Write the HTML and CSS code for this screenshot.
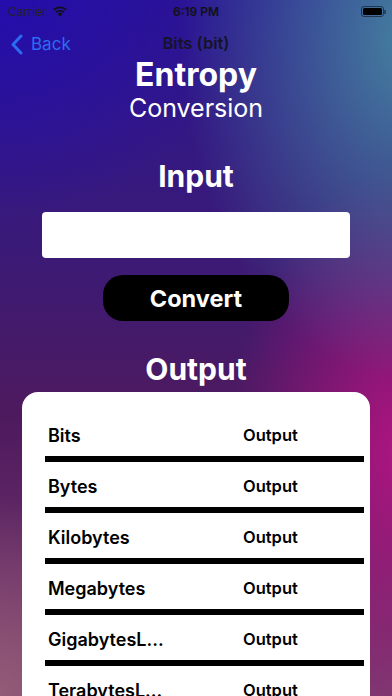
FILE: index.html
```html
<!DOCTYPE html>
<html>
<head>
<meta charset="utf-8">
<link rel="stylesheet" href="styles.css">
</head>
<body>
<div class="screen">
  <div class="status">
    <div class="status-left">
      <span class="carrier">Carrier</span>
      <svg class="wifi" width="16" height="12" viewBox="0 0 16 12">
        <path d="M8 11.5 L5.6 8.9 A3.6 3.6 0 0 1 10.4 8.9 Z" fill="#111"/>
        <path d="M3.6 6.8 A6.4 6.4 0 0 1 12.4 6.8 L11.2 8.1 A4.7 4.7 0 0 0 4.8 8.1 Z" fill="#111"/>
        <path d="M1.2 4.3 A9.8 9.8 0 0 1 14.8 4.3 L13.6 5.6 A8 8 0 0 0 2.4 5.6 Z" fill="#111"/>
      </svg>
    </div>
    <span class="time">6:19 PM</span>
    <div class="battery"><div class="battery-fill"></div></div>
  </div>
  <div class="nav">
    <div class="back">
      <svg width="13" height="21" viewBox="0 0 13 21"><path d="M11 2 L3 10.5 L11 19" fill="none" stroke="#2a6cf2" stroke-width="3" stroke-linecap="round" stroke-linejoin="round"/></svg>
      <span>Back</span>
    </div>
    <div class="nav-title">Bits (bit)</div>
  </div>
  <h1 class="title">Entropy</h1>
  <div class="subtitle">Conversion</div>
  <h2 class="section">Input</h2>
  <div class="input-box"></div>
  <div class="convert">Convert</div>
  <h2 class="section out">Output</h2>
  <div class="card">
    <div class="row"><span class="name">Bits</span><span class="val">Output</span></div>
    <div class="divider"></div>
    <div class="row"><span class="name">Bytes</span><span class="val">Output</span></div>
    <div class="divider"></div>
    <div class="row"><span class="name">Kilobytes</span><span class="val">Output</span></div>
    <div class="divider"></div>
    <div class="row"><span class="name">Megabytes</span><span class="val">Output</span></div>
    <div class="divider"></div>
    <div class="row"><span class="name">GigabytesL...</span><span class="val">Output</span></div>
    <div class="divider"></div>
    <div class="row"><span class="name">TerabytesL...</span><span class="val">Output</span></div>
  </div>
</div>
</body>
</html>
```
FILE: styles.css
```css
* { box-sizing: border-box; margin: 0; padding: 0; }
html, body { width: 392px; height: 696px; overflow: hidden; }
body {
  font-family: Inter, "Liberation Sans", sans-serif;
}
.screen {
  width: 392px;
  height: 696px;
  overflow: hidden;
  display: flex;
  flex-direction: column;
  align-items: center;
  background:
    radial-gradient(ellipse 230px 340px at 410px 40px, rgba(70,135,160,0.95), rgba(70,135,160,0) 100%),
    radial-gradient(ellipse 170px 280px at 400px 450px, rgba(178,20,130,0.95), rgba(178,20,130,0) 100%),
    radial-gradient(ellipse 240px 220px at 0px 0px, rgba(35,12,175,0.9), rgba(35,12,175,0) 100%),
    radial-gradient(ellipse 150px 200px at 0px 696px, rgba(150,95,120,0.9), rgba(150,95,120,0) 100%),
    linear-gradient(180deg, #2c1590 0%, #3a1a78 35%, #4e1a5e 60%, #7a3a6e 100%);
}
.screen > * { flex-shrink: 0; }
.status {
  width: 100%;
  height: 22px;
  display: flex;
  align-items: center;
  justify-content: space-between;
  padding: 0 8px;
  position: relative;
}
.status-left { display: flex; align-items: center; gap: 5px; width: 80px; }
.carrier { font-size: 12px; color: #222; letter-spacing: -0.1px; }
.wifi { margin-top: -1px; }
.time { font-size: 12px; font-weight: 600; color: #111; }
.battery {
  width: 23px; height: 11px;
  border: 1px solid rgba(0,0,0,0.5);
  border-radius: 3px;
  padding: 1px;
  position: relative;
}
.battery::after {
  content: ""; position: absolute; right: -3px; top: 3px; width: 2px; height: 4px;
  background: rgba(0,0,0,0.4); border-radius: 0 1px 1px 0;
}
.battery-fill { width: 100%; height: 100%; background: #000; border-radius: 1.5px; }
.status .time { position: absolute; left: 0; right: 0; text-align: center; }
.status .battery { margin-left: auto; }

.nav {
  width: 100%;
  height: 44px;
  position: relative;
  display: flex;
  align-items: center;
}
.back {
  display: flex; align-items: center; gap: 8px;
  padding-left: 10px;
  color: #2a6cf2;
  font-size: 17px;
}
.nav-title {
  position: absolute; left: 0; right: 0; text-align: center;
  font-size: 16.5px; font-weight: 600; color: #141428;
  top: 11px;
}
.title {
  margin-top: -9px;
  font-size: 32px; font-weight: 700; color: #fff; line-height: 36px;
}
.subtitle {
  font-size: 25px; font-weight: 400; color: #fff; line-height: 30px;
}
.section {
  margin-top: 36px;
  font-size: 30px; font-weight: 700; color: #fff; line-height: 34px;
}
.input-box {
  margin-top: 19px;
  width: 308px; height: 46px;
  background: #fff; border-radius: 4px;
}
.convert {
  margin-top: 17px;
  width: 186px; height: 46px;
  background: #000; border-radius: 20px;
  color: #fff; font-size: 23.5px; font-weight: 700;
  display: flex; align-items: center; justify-content: center;
}
.section.out { margin-top: 31px; }
.card {
  margin-top: 6px;
  width: 348px;
  flex: 1 0 auto;
  background: #fff;
  border-radius: 16px 16px 0 0;
  padding: 32px 6px 0 23px;
  display: flex; flex-direction: column;
}
.row {
  display: flex; align-items: center;
  height: 22px;
  padding-left: 3px;
}
.name { width: 195px; font-size: 18px; font-weight: 600; color: #000; }
.val { font-size: 16.5px; font-weight: 600; color: #000; }
.divider {
  height: 6px; background: #000;
  margin: 10px 0 13px;
}
```
